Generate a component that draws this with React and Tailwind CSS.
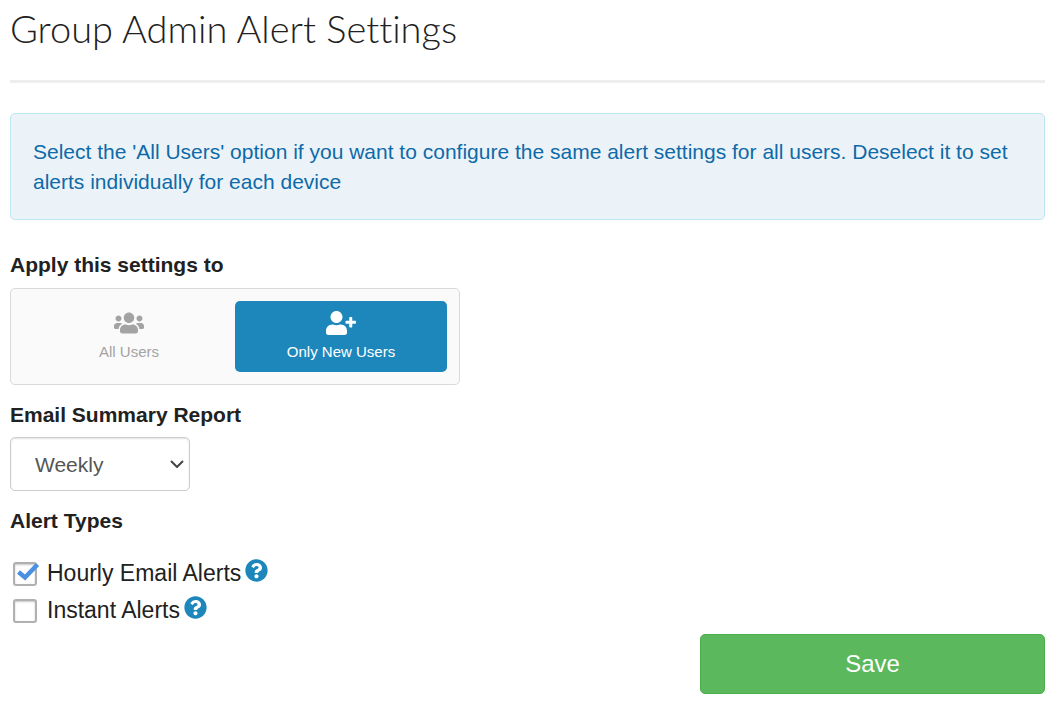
import { useState } from "react";
import { FaUsers, FaUserPlus, FaQuestionCircle } from "react-icons/fa";

const AUDIENCES = [
  { id: "all", label: "All Users", Icon: FaUsers },
  { id: "new", label: "Only New Users", Icon: FaUserPlus },
];

const REPORT_OPTIONS = ["Daily", "Weekly", "Monthly"];

// --- Checkbox row with help link ---
const AlertOption = ({ id, label, checked, onChange }) => (
  <div className="flex items-center h-[37px]">
    <span className="relative flex ml-[3px] mr-2.5">
      <input
        id={id}
        type="checkbox"
        checked={checked}
        onChange={onChange}
        className="appearance-none w-6 h-6 rounded-[3px] border-2 border-[#b0b0b0] bg-white shadow-[inset_0_1px_2px_#c8c8c8]"
      />
      {checked && (
        <svg viewBox="0 0 24 24" className="absolute left-0 top-0 w-6 h-6 overflow-visible pointer-events-none" aria-hidden="true">
          <path d="M5.5 10 L12 15.5 L24.5 2.5" fill="none" stroke="#4a90e2" strokeWidth="4.5" />
        </svg>
      )}
    </span>
    <label htmlFor={id} className="mb-0.5 text-[23px] leading-[30px]">{label}</label>
    <a href="#help" aria-label={`Help for ${label}`} className="ml-1 mb-1.5 text-[#1d87bb]">
      <FaQuestionCircle className="w-[23px] h-[23px]" />
    </a>
  </div>
);

export default function App() {
  const [audience, setAudience] = useState("new");
  const [report, setReport] = useState("Weekly");
  const [hourly, setHourly] = useState(true);
  const [instant, setInstant] = useState(false);

  return (
    <main className="bg-white pl-2.5 pr-4 pb-4 text-[#212121] font-['Liberation_Sans',Arial,sans-serif]">
      <h1 className="pt-1 pb-7 border-b-[3px] border-[#eeeeee] text-[38px] leading-[48px] font-light font-[Lato,sans-serif] [font-variant-ligatures:none]">
        Group Admin Alert Settings
      </h1>

      {/* Info banner */}
      <div className="mt-[30px] px-[22px] pt-[23px] pb-[22px] rounded-[5px] border border-[#bce8f1] bg-[#ebf3f9] text-[#0e6aa8] text-[21px] leading-[30px]">
        Select the 'All Users' option if you want to configure the same alert settings for all users. Deselect it to set
        alerts individually for each device
      </div>

      {/* Audience toggle */}
      <h2 id="audience-label" className="mt-[30px] text-[21px] leading-[30px] font-bold">Apply this settings to</h2>
      <div
        role="group"
        aria-labelledby="audience-label"
        className="mt-2 flex max-w-[450px] p-3 rounded-[5px] border border-[#d9d9d9] bg-[#fafafa]"
      >
        {AUDIENCES.map(({ id, label, Icon }) => (
          <button
            key={id}
            type="button"
            aria-pressed={audience === id}
            onClick={() => setAudience(id)}
            className={`flex-1 flex flex-col items-center pt-1.5 pb-2.5 rounded-[5px] text-[15px] leading-5 ${
              audience === id ? "bg-[#1d87bb] text-white" : "text-[#a3a3a3]"
            }`}
          >
            <Icon className="w-[30px] h-8 mb-[3px]" />
            {label}
          </button>
        ))}
      </div>

      {/* Email summary */}
      <label htmlFor="report" className="block mt-[15px] text-[21px] leading-[30px] font-bold">Email Summary Report</label>
      <div className="relative mt-[7px] w-[180px]">
        <select
          id="report"
          value={report}
          onChange={(e) => setReport(e.target.value)}
          className="appearance-none block w-full h-[54px] pt-0.5 pl-6 pr-8 rounded-[5px] border border-[#cccccc] bg-white text-[#555555] text-[21px] shadow-[inset_0_1px_2px_#e2e2e2]"
        >
          {REPORT_OPTIONS.map((option) => (
            <option key={option}>{option}</option>
          ))}
        </select>
        <svg viewBox="0 0 14 8" className="absolute right-1.5 top-[23px] w-3.5 h-2 pointer-events-none" aria-hidden="true">
          <path d="M1 1 L7 7 L13 1" fill="none" stroke="#444444" strokeWidth="2" />
        </svg>
      </div>

      {/* Alert types */}
      <h2 className="mt-[15px] text-[21px] leading-[30px] font-bold">Alert Types</h2>
      <div className="mt-[19px]">
        <AlertOption id="hourly" label="Hourly Email Alerts" checked={hourly} onChange={() => setHourly(!hourly)} />
        <AlertOption id="instant" label="Instant Alerts" checked={instant} onChange={() => setInstant(!instant)} />
      </div>

      <button
        type="button"
        className="block ml-auto mt-[5px] w-1/3 h-[60px] rounded-[5px] border border-[#4cae4c] bg-[#5cb85c] text-white text-2xl"
      >
        Save
      </button>
    </main>
  );
}
